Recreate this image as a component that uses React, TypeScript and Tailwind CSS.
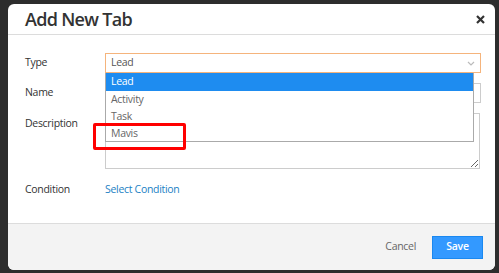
const font = "font-['Open_Sans','Noto_Sans',sans-serif]";

const options = ["Lead", "Activity", "Task", "Mavis"];

export default function App() {
  return (
    <div className={`w-[499px] h-[273px] bg-[#2d2d2d] pt-[4px] pl-[8px] overflow-hidden ${font}`}>
      <div className="relative w-[487px] h-[266px] bg-white rounded-[6px] overflow-hidden flex flex-col">
        {/* Header */}
        <div className="h-[31px] border-b border-[#dcdcdc] flex items-center justify-between pl-[17px] pr-[10px] shrink-0">
          <h1 className="text-[18px] font-semibold text-[#333] leading-none tracking-[-0.7px]">Add New Tab</h1>
          <svg width="9" height="9" viewBox="0 0 9 9">
            <path d="M1 1 L8 8 M8 1 L1 8" stroke="#333" strokeWidth="2.2" />
          </svg>
        </div>

        {/* Body */}
        <div className="flex-1 pt-[18px] pl-[17px] pr-[14px] text-[10.5px] tracking-[-0.3px] text-[#333]">
          <div className="flex items-center h-[20px]">
            <span className="w-[80px]">Type</span>
            <div className="flex-1 h-[20px] border border-[#f5b47c] flex items-center justify-between px-[5px] text-[#555]">
              <span>Lead</span>
              <svg width="8" height="5" viewBox="0 0 8 5">
                <path d="M1 1 L4 4 L7 1" stroke="#bbb" strokeWidth="1.2" fill="none" />
              </svg>
            </div>
          </div>

          <div className="flex items-center h-[20px] mt-[10px]">
            <span className="w-[80px]">Name</span>
            <div className="flex-1 h-[20px] border border-[#ccc]" />
          </div>

          <div className="flex items-start mt-[10px]">
            <span className="w-[80px] pt-[3px]">Description</span>
            <textarea className="flex-1 mr-[1px] h-[56px] border border-[#ccc] outline-none" />
          </div>

          <div className="flex items-center h-[18px] mt-[12px]">
            <span className="w-[80px]">Condition</span>
            <span className="text-[#1b7fc4]">Select Condition</span>
          </div>
        </div>

        {/* Footer */}
        <div className="h-[47px] shrink-0 bg-[#f3f3f3] border-t border-[#dcdcdc] flex items-center justify-end pr-[12px] gap-[16px] tracking-[-0.3px]">
          <span className="text-[10.5px] text-[#666]">Cancel</span>
          <button className="w-[51px] h-[23px] bg-[#3399ff] border border-[#1a88f0] text-white text-[10.5px] font-semibold">
            Save
          </button>
        </div>

        {/* Dropdown list */}
        <div className="absolute left-[97px] top-[69px] w-[369px] h-[69px] bg-white border border-[#aaa] border-t-0 text-[10.5px] tracking-[-0.3px] text-[#666]">
          {options.map((o, i) => (
            <div
              key={o}
              className={`${i === 0 ? "h-[18px] bg-[#1e8cf0] text-white" : "h-[17px]"} flex items-center pl-[5px]`}
            >
              {o}
            </div>
          ))}
        </div>

        {/* Annotation */}
        <div className="absolute left-[85px] top-[119px] w-[93px] h-[27px] border-[3px] border-[#ff0000] rounded-[2px]" />
      </div>
    </div>
  );
}
